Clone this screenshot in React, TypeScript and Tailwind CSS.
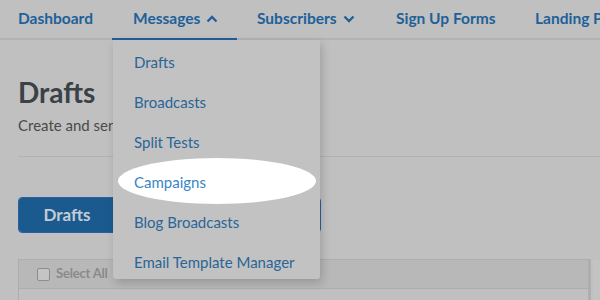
import React from 'react'

const ChevronUp = () => (
  <svg width="12" height="8" viewBox="0 0 12 8" className="ml-[6px]">
    <path d="M1.5 6.5 L6 2 L10.5 6.5" fill="none" stroke="currentColor" strokeWidth="2.3" />
  </svg>
)

const ChevronDown = () => (
  <svg width="12" height="8" viewBox="0 0 12 8" className="ml-[6px]">
    <path d="M1.5 1.5 L6 6 L10.5 1.5" fill="none" stroke="currentColor" strokeWidth="2.3" />
  </svg>
)

const menuItems = ['Drafts', 'Broadcasts', 'Split Tests', 'Campaigns', 'Blog Broadcasts', 'Email Template Manager']

const App = () => {
  return (
    <div className="relative w-[600px] h-[300px] overflow-hidden bg-[#c0c0c0] font-['Lato',sans-serif]">
      {/* top nav */}
      <nav className="flex h-[40px] border-b-2 border-[#b3b3b6] text-[15.5px] font-bold text-[#20609a] whitespace-nowrap">
        <div className="shrink-0 w-[112px] pl-[18px] flex items-center">Dashboard</div>
        <div className="shrink-0 w-[125px] pl-[21px] flex items-center border-b-2 border-[#1f5f98] mb-[-2px]">
          Messages
          <ChevronUp />
        </div>
        <div className="shrink-0 w-[139px] pl-5 flex items-center">
          Subscribers
          <ChevronDown />
        </div>
        <div className="shrink-0 w-[139px] pl-5 flex items-center">Sign Up Forms</div>
        <div className="shrink-0 pl-5 flex items-center">Landing Pages</div>
      </nav>

      {/* page body */}
      <div className="pl-[18px]">
        <h1 className="mt-[34px] text-[28px] leading-[36px] font-bold text-[#3a4147]">Drafts</h1>
        <p className="mt-[5px] text-[15px] leading-[20px] text-[#4a4a4a] whitespace-nowrap">
          Create and send one-off broadcasts
        </p>
        <div className="mt-[21px] border-t border-[#b2b2b2]" />

        <div className="mt-[40px] flex w-[303px] h-[36px] rounded-[4px] border border-[#2a5fa3] overflow-hidden text-[17px] font-bold">
          <div className="w-[96px] flex items-center justify-center bg-[#1b5a8f] text-[#c4ccd4]">Drafts</div>
          <div className="flex-1" />
        </div>

        <div className="mt-[26px] w-[573px] border border-[#adadad] border-r-[3px] border-r-[#aeaeae]">
          <div className="h-[29px] bg-[#b8b8b8] border-b border-[#adadad] flex items-center pl-[18px] text-[13px] tracking-[-0.2px] font-bold text-[#8a8a8a] whitespace-nowrap">
            <span className="w-[13px] h-[13px] rounded-[2px] border border-[#8d8d8d] bg-[#c4c4c4] mr-[6px]" />
            Select All
          </div>
          <div className="h-[30px] bg-[#c0c0c0]" />
        </div>
      </div>
      <div className="absolute right-0 top-[260px] w-[7px] h-[40px] bg-[#c3c3c3]" />

      {/* dropdown menu */}
      <div className="absolute left-[113px] top-[40px] w-[207px] h-[239px] pt-[2px] bg-[#c2c2c2] shadow-[2px_4px_10px_rgba(0,0,0,0.18)] rounded-b-[3px] overflow-hidden">
        {menuItems.map((item) => (
          <div key={item} className="relative h-10 flex items-center pl-[21px] text-[15px] text-[#2a6597] whitespace-nowrap">
            {item === 'Campaigns' && (
              <div className="absolute left-[5px] top-[-4px] w-[198px] h-[46px] rounded-[50%] bg-white" />
            )}
            <span className={item === 'Campaigns' ? 'relative text-[#3a85c6]' : 'relative'}>{item}</span>
          </div>
        ))}
      </div>
    </div>
  )
}

export default App
